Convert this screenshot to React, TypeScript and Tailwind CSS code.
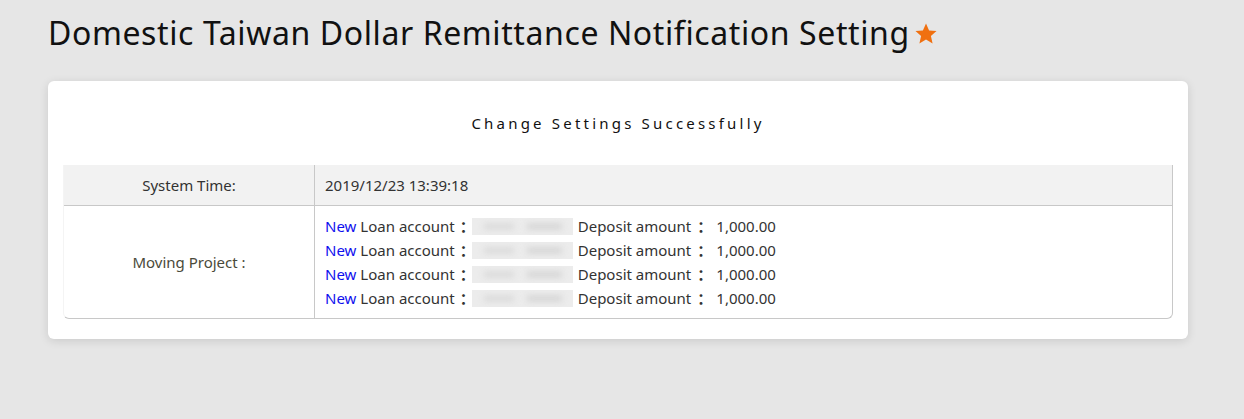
import React from "react";

const rows = [0, 1, 2, 3];

function Blur() {
  return (
    <span className="inline-block align-middle w-[101px] h-[17px] bg-[#ececec] relative overflow-hidden">
      <span className="absolute left-[12px] top-[6px] w-[30px] h-[5px] bg-[#d6d6d6] blur-[3px]" />
      <span className="absolute left-[55px] top-[6px] w-[35px] h-[5px] bg-[#d0d0d0] blur-[3px]" />
    </span>
  );
}

function Colon({ cls }: { cls: string }) {
  return (
    <span className={"inline-block w-[12px] font-bold overflow-visible whitespace-nowrap " + cls} style={{ fontFamily: '"Noto Sans CJK SC", sans-serif' }}>：</span>
  );
}

export default function App() {
  return (
    <div className="min-h-[419px] bg-[#e6e6e6] pt-[12px] px-[48px] pb-[80px]" style={{ fontFamily: '"Noto Sans", "Open Sans", sans-serif' }}>
      <h1 className="flex items-center text-[32px] leading-[42px] text-[#111] tracking-[0.6px]">
        <span>Domestic Taiwan Dollar Remittance Notification Setting</span>
        <svg className="ml-[4px] mt-[2px]" width="24" height="24" viewBox="0 0 24 24">
          <path d="M12 1.5l3.1 7 7.4.6-5.6 4.9 1.7 7.4L12 17.5l-6.6 3.9 1.7-7.4L1.5 9.1l7.4-.6z" fill="#f07010" />
        </svg>
      </h1>
      <div className="mt-[27px] w-[1140px] bg-white rounded-[6px] shadow-[0_2px_10px_rgba(0,0,0,0.12)] px-[15px] pt-[32px] pb-[20px]">
        <div className="text-center text-[15px] tracking-[3.2px] text-[#111] leading-[20px]">Change Settings Successfully</div>
        <div className="mt-[32px] border-r border-b border-l border-l-[#f4f4f4] border-[#c8c8c8] rounded-b-[6px] text-[15px] text-[#333]">
          <div className="flex bg-[#f2f2f2] border-b border-[#c8c8c8] h-[41px]">
            <div className="w-[251px] flex items-center justify-center border-r border-[#c8c8c8]">System Time:</div>
            <div className="flex items-center pl-[10px]">2019/12/23 13:39:18</div>
          </div>
          <div className="flex">
            <div className="w-[251px] flex items-center justify-center border-r border-[#c8c8c8] text-[#4a4a3a]">Moving Project :</div>
            <div className="pl-[10px] py-[8px] leading-[24px]">
              {rows.map((i) => (
                <div key={i} className="flex items-center">
                  <span className="text-[#1010ee]">New</span>
                  <span className="ml-[4px]">Loan account</span>
                  <Colon cls="ml-[5px]" />
                  <Blur />
                  <span className="ml-[5px]">Deposit amount</span>
                  <Colon cls="ml-[6px]" />
                  <span className="ml-[7px]">1,000.00</span>
                </div>
              ))}
            </div>
          </div>
        </div>
      </div>
    </div>
  );
}
